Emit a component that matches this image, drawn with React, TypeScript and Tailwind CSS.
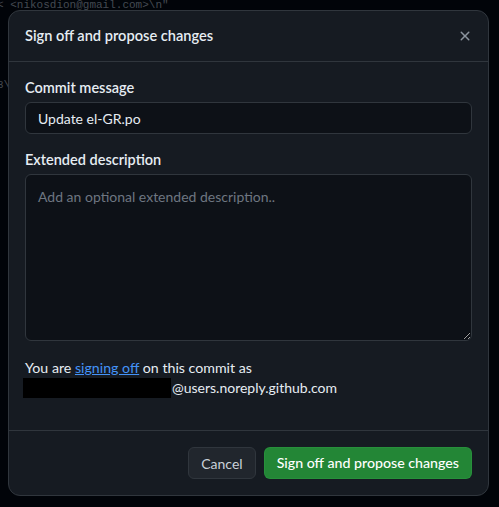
import React from "react";

function XIcon() {
  return (
    <svg viewBox="0 0 16 16" width="16" height="16" fill="currentColor" aria-hidden="true">
      <path d="M3.72 3.72a.75.75 0 0 1 1.06 0L8 6.94l3.22-3.22a.749.749 0 0 1 1.275.326.749.749 0 0 1-.215.734L9.06 8l3.22 3.22a.749.749 0 0 1-.326 1.275.749.749 0 0 1-.734-.215L8 9.06l-3.22 3.22a.751.751 0 0 1-1.042-.018.751.751 0 0 1-.018-1.042L6.94 8 3.72 4.78a.75.75 0 0 1 0-1.06Z" />
    </svg>
  );
}

export default function App() {
  return (
    <div className="relative w-[499px] h-[507px] overflow-hidden bg-[#010409] font-['Lato',sans-serif]">
      {/* page behind the dialog */}
      <div className="font-['Liberation_Mono',monospace] text-[11px] leading-[20px] text-[#444a52] -mt-[5px] -ml-[3px] whitespace-pre">
        <div>{'< <nikosdion@gmail.com>\\n"'}</div>
        <div> </div>
        <div> </div>
        <div> </div>
        <div>{'3\\'}</div>
      </div>

      {/* dialog */}
      <div className="absolute left-[8px] top-[10px] w-[481px] h-[486px] flex flex-col rounded-xl border border-[#30363d] bg-[#161b22] text-[#e6edf3]">
        <div className="flex items-center justify-between h-[51px] pl-4 pr-4 border-b border-[#30363d]">
          <h2 className="text-[14.6px] font-semibold">Sign off and propose changes</h2>
          <button className="text-[#8b949e] -mr-[1px]">
            <XIcon />
          </button>
        </div>

        <div className="flex-1 px-4 pt-4">
          <label className="block text-[14.5px] font-semibold leading-5 mb-1">Commit message</label>
          <div className="h-8 rounded-md border border-[#30363d] bg-[#0d1117] px-3 flex items-center text-[14px]">
            Update el-GR.po
          </div>

          <label className="block text-[14.5px] font-semibold leading-5 mt-4 mb-1">Extended description</label>
          <textarea
            className="block w-full h-[167px] rounded-md border border-[#30363d] bg-[#0d1117] px-3 pt-[12px] pb-2 text-[14px] leading-5 placeholder:text-[#6e7681] outline-none resize-y"
            placeholder="Add an optional extended description.."
          />

          <p className="mt-[17px] text-[14.2px] leading-5 text-[#e6edf3]">
            You are <a className="text-[#4493f8] underline">signing off</a> on this commit as
            <br />
            <span className="inline-block align-top w-[148px] h-5 bg-black -ml-[2px]" />
            <span className="ml-[1px] text-[14px]">@users.noreply.github.com</span>
          </p>
        </div>

        <div className="flex justify-end gap-2 border-t border-[#30363d] p-4">
          <button className="h-8 px-3 rounded-md border border-[#30363d] bg-[#21262d] text-[14px] text-[#c9d1d9]">
            Cancel
          </button>
          <button className="h-8 px-3 rounded-md border border-[#2ea043]/40 bg-[#238636] text-[14.2px] font-medium text-white">
            Sign off and propose changes
          </button>
        </div>
      </div>
    </div>
  );
}
